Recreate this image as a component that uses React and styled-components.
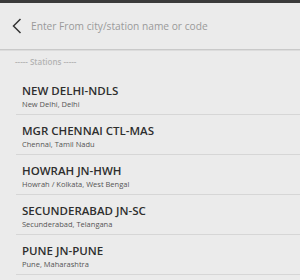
import React from "react";
import styled, { createGlobalStyle } from "styled-components";

const GlobalStyle = createGlobalStyle`
  html, body {
    margin: 0;
    padding: 0;
    background: #ebebeb;
    font-family: "Open Sans", "Noto Sans", sans-serif;
  }
`;

const stations = [
  { name: "NEW DELHI-NDLS", place: "New Delhi, Delhi" },
  { name: "MGR CHENNAI CTL-MAS", place: "Chennai, Tamil Nadu" },
  { name: "HOWRAH JN-HWH", place: "Howrah / Kolkata, West Bengal" },
  { name: "SECUNDERABAD JN-SC", place: "Secunderabad, Telangana" },
  { name: "PUNE JN-PUNE", place: "Pune, Maharashtra" },
];

const Screen = styled.div`
  width: 300px;
  height: 280px;
  overflow: hidden;
  background: #ebebeb;
`;

const StatusStrip = styled.div`
  height: 3px;
  background: #3b3b3b;
`;

const SearchBar = styled.div`
  display: flex;
  align-items: center;
  height: 46px;
  border-bottom: 1px solid #c9c9c9;
  box-shadow: 0 1px 0 #dcdcdc;
`;

const BackButton = styled.button`
  display: flex;
  align-items: center;
  justify-content: center;
  width: 31px;
  height: 46px;
  padding: 0 0 0 2px;
  border: none;
  background: none;
  color: #333;
`;

const SearchInput = styled.input`
  flex: 1;
  border: none;
  outline: none;
  background: transparent;
  padding: 0;
  font-family: "Open Sans", sans-serif;
  font-size: 10.2px;
  color: #333;
  &::placeholder {
    color: #9a9a9a;
  }
`;

const SectionLabel = styled.div`
  height: 24px;
  padding: 1px 0 0 15px;
  line-height: 22px;
  font-size: 8px;
  font-weight: 600;
  color: #b3b3b3;
`;

const List = styled.ul`
  list-style: none;
  margin: 0;
  padding: 0;
`;

const Row = styled.li`
  margin-left: 16px;
  padding: 8px 0 4px 6px;
  border-bottom: 1px solid #d6d6d6;
`;

const Title = styled.div`
  font-size: 11.5px;
  line-height: 16px;
  font-weight: 600;
  color: #2e2e2e;
`;

const Subtitle = styled.div`
  font-size: 7.5px;
  line-height: 11px;
  color: #555;
`;

const Chevron = () => (
  <svg width="10" height="16" viewBox="0 0 10 16" fill="none">
    <path d="M8.5 1 L1.5 8 L8.5 15" stroke="currentColor" strokeWidth="1.5" />
  </svg>
);

export default function App() {
  return (
    <Screen>
      <GlobalStyle />
      <StatusStrip />
      <SearchBar>
        <BackButton aria-label="Back">
          <Chevron />
        </BackButton>
        <SearchInput placeholder="Enter From city/station name or code" />
      </SearchBar>
      <SectionLabel>----- Stations -----</SectionLabel>
      <List>
        {stations.map((s) => (
          <Row key={s.name}>
            <Title>{s.name}</Title>
            <Subtitle>{s.place}</Subtitle>
          </Row>
        ))}
      </List>
    </Screen>
  );
}
